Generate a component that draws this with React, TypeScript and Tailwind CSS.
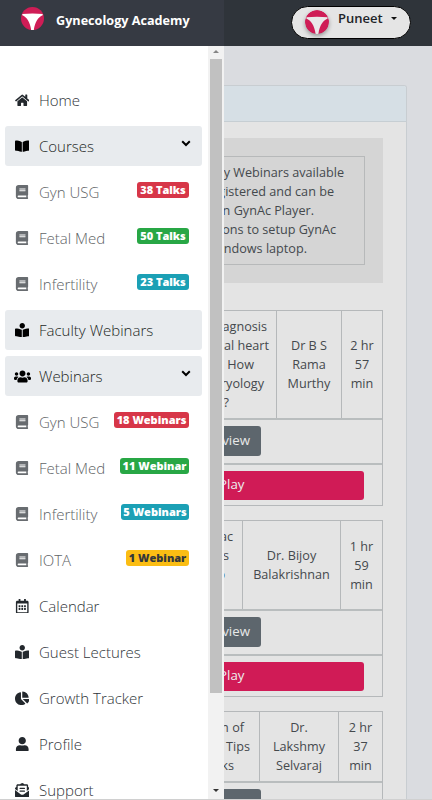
import React from "react";
import {
  FaHome, FaBookOpen, FaBook, FaBookReader, FaUsers, FaRegCalendarAlt,
  FaChartPie, FaUser, FaEnvelopeOpenText,
} from "react-icons/fa";
import type { IconType } from "react-icons";

function Logo({ className, fill }: { className: string; fill: string }) {
  return (
    <svg viewBox="0 0 24 24" className={className}>
      <circle cx="12" cy="12" r="12" fill="#cf1d56" />
      <path
        d="M1.4 7.2 Q12 6.4 22.6 7.2 L22.6 8.6 C18 10.6 14.6 15.5 13.4 23.9 H10.6 C9.4 15.5 6 10.6 1.4 8.6 Z"
        fill={fill}
      />
    </svg>
  );
}

type Item = {
  icon: IconType;
  label: string;
  kind: "link" | "group" | "sub";
  chevron?: boolean;
  badge?: string;
  badgeClass?: string;
};

const items: Item[] = [
  { icon: FaHome, label: "Home", kind: "link" },
  { icon: FaBookOpen, label: "Courses", kind: "group", chevron: true },
  { icon: FaBook, label: "Gyn USG", kind: "sub", badge: "38 Talks", badgeClass: "bg-[#d73648] text-white w-[52px]" },
  { icon: FaBook, label: "Fetal Med", kind: "sub", badge: "50 Talks", badgeClass: "bg-[#28a745] text-white w-[52px]" },
  { icon: FaBook, label: "Infertility", kind: "sub", badge: "23 Talks", badgeClass: "bg-[#1ba0b5] text-white w-[52px]" },
  { icon: FaBookReader, label: "Faculty Webinars", kind: "group" },
  { icon: FaUsers, label: "Webinars", kind: "group", chevron: true },
  { icon: FaBook, label: "Gyn USG", kind: "sub", badge: "18 Webinars", badgeClass: "bg-[#d73648] text-white w-[75px]" },
  { icon: FaBook, label: "Fetal Med", kind: "sub", badge: "11 Webinar", badgeClass: "bg-[#28a745] text-white w-[69px]" },
  { icon: FaBook, label: "Infertility", kind: "sub", badge: "5 Webinars", badgeClass: "bg-[#1ba0b5] text-white w-[68px]" },
  { icon: FaBook, label: "IOTA", kind: "sub", badge: "1 Webinar", badgeClass: "bg-[#fbbd13] text-[#33373b] w-[63px]" },
  { icon: FaRegCalendarAlt, label: "Calendar", kind: "link" },
  { icon: FaBookReader, label: "Guest Lectures", kind: "link" },
  { icon: FaChartPie, label: "Growth Tracker", kind: "link" },
  { icon: FaUser, label: "Profile", kind: "link" },
  { icon: FaEnvelopeOpenText, label: "Support", kind: "link" },
];

const rowClass = {
  link: "text-[#30353a]",
  group: "bg-[#e8ebee] text-[#1b1f23]",
  sub: "text-[#606366]",
};
const iconClass = { link: "text-[#23282d]", group: "text-black", sub: "text-[#686c70]" };

function NavRow({ item }: { item: Item }) {
  const Icon = item.icon;
  return (
    <div className={`flex h-10 w-[197px] shrink-0 items-center rounded-[3px] ${rowClass[item.kind]}`}>
      <span className={`ml-[7px] flex w-5 justify-center ${iconClass[item.kind]}`}>
        <Icon size={item.icon === FaUsers ? 17 : item.icon === FaBook ? 14 : 14.5} />
      </span>
      <span className="ml-[7px] whitespace-nowrap text-[15px] leading-5 font-light">{item.label}</span>
      {item.chevron && (
        <svg viewBox="0 0 10 7" className="mr-[11px] mb-[6px] ml-auto h-[7px] w-2.5">
          <path d="M1.2 1.3L5 5L8.8 1.3" fill="none" stroke="#000" strokeWidth="2" />
        </svg>
      )}
      {item.badge && (
        <span className={`mr-[13px] mb-1 ml-auto flex h-4 items-center justify-center rounded-[3px] whitespace-nowrap text-[11px] leading-4 font-extrabold ${item.badgeClass}`}>
          {item.badge}
        </span>
      )}
    </div>
  );
}

function Drawer() {
  return (
    <aside className="flex w-56 shrink-0 flex-col bg-white">
      <header className="flex h-[46px] shrink-0 items-center bg-[#363a43]">
        <Logo className="mb-[10px] ml-[21px] h-[23px] w-[23px]" fill="#ffffff" />
        <span className="mb-1.5 ml-3 text-[12.65px] font-bold whitespace-nowrap text-white">Gynecology Academy</span>
      </header>
      <div className="flex min-h-0 flex-1">
        <nav className="flex flex-1 flex-col gap-1.5 overflow-hidden pt-[35px] pl-[5px]">
          <div className="-mt-px flex flex-col gap-1.5">
            {items.map((item, i) => <NavRow key={i} item={item} />)}
          </div>
        </nav>
        <div className="flex w-4 flex-col items-center bg-[#f2f2f2] pr-px">
          <svg viewBox="0 0 6 3" className="mt-1 h-[3px] w-1.5"><path d="M0 3L3 0L6 3Z" fill="#858585" /></svg>
          <div className="mt-[6px] h-[634px] w-3 bg-[#c1c1c1]" />
          <svg viewBox="0 0 6 3" className="mt-auto mb-[7px] h-[3px] w-1.5"><path d="M0 0L3 3L6 0Z" fill="#333" /></svg>
        </div>
      </div>
    </aside>
  );
}

type Line = { text: string; inset: string };

function ClippedLines({ lines }: { lines: Line[] }) {
  return (
    <>
      {lines.map((line) => (
        <div key={line.text} className={`flex h-[19px] shrink-0 items-center justify-end whitespace-nowrap ${line.inset}`}>{line.text}</div>
      ))}
    </>
  );
}

function Cell({ lines, width }: { lines: string[]; width: string }) {
  return (
    <div className={`flex shrink-0 flex-col justify-center border-l border-[#b5b8ba] text-center ${width}`}>
      {lines.map((l) => <div key={l} className="h-[19px] leading-[19px] whitespace-nowrap">{l}</div>)}
    </div>
  );
}

function PreviewRow() {
  return (
    <div className="flex h-[44.5px] items-start border-t-2 border-[#b9bdbe] pt-1.5">
      <div className="flex h-[30px] w-[36.5px] items-center justify-end rounded-r-[3px] bg-[#5d666d] pr-[10.5px] text-[13.3px] whitespace-nowrap text-[#e8e8e8]">Preview</div>
    </div>
  );
}

function PlayRow() {
  return (
    <div className="flex h-[42.5px] items-start border-t-2 border-[#b9bdbe] pt-1.5">
      <div className="flex h-[29px] w-[139.5px] items-center justify-end rounded-r-[3px] bg-[#d01b56] pr-[119px] text-[13.3px] whitespace-nowrap text-[#eee]">Play</div>
    </div>
  );
}

type Lecture = {
  title: Line[];
  speaker: string[];
  time: string[];
  height: string;
  margin: string;
  speakerWidth: string;
  timeWidth: string;
};

const lectures: Lecture[] = [
  {
    title: [
      { text: "diagnosis", inset: "pr-[9px]" },
      { text: "fetal heart", inset: "pr-[7px]" },
      { text: ": How", inset: "pr-[22px]" },
      { text: "embryology", inset: "pr-[12px]" },
      { text: "?", inset: "pr-[47px]" },
    ],
    speaker: ["Dr B S", "Rama", "Murthy"],
    time: ["2 hr", "57", "min"],
    height: "h-[107px]", margin: "mt-[27px]", speakerWidth: "w-[65px]", timeWidth: "w-[41px]",
  },
  {
    title: [
      { text: "cardiac", inset: "pr-[9px]" },
      { text: "s", inset: "pr-[13px]" },
      { text: "o", inset: "pr-[17px]" },
      { text: "", inset: "" },
    ],
    speaker: ["Dr. Bijoy", "Balakrishnan"],
    time: ["1 hr", "59", "min"],
    height: "h-[88px]", margin: "mt-[14px]", speakerWidth: "w-[98px]", timeWidth: "w-[42px]",
  },
  {
    title: [
      { text: "Evaluation of", inset: "pr-[15px]" },
      { text: "Tips", inset: "pr-[9px]" },
      { text: "Tricks", inset: "pr-[25px]" },
    ],
    speaker: ["Dr.", "Lakshmy", "Selvaraj"],
    time: ["2 hr", "37", "min"],
    height: "h-[69px]", margin: "mt-[14px]", speakerWidth: "w-[79px]", timeWidth: "w-[44px]",
  },
];

function LectureTable({ lecture }: { lecture: Lecture }) {
  return (
    <div className={`w-[159px] shrink-0 border-y border-r border-[#b5b8ba] ${lecture.margin}`}>
      <div className={`flex ${lecture.height}`}>
        <div className="flex min-w-0 flex-1 flex-col justify-center overflow-hidden">
          <ClippedLines lines={lecture.title} />
        </div>
        <Cell lines={lecture.speaker} width={lecture.speakerWidth} />
        <Cell lines={lecture.time} width={lecture.timeWidth} />
      </div>
      <PreviewRow />
      <PlayRow />
    </div>
  );
}

const notice: Line[] = [
  { text: "Faculty Webinars available", inset: "pr-5" },
  { text: "registered and can be", inset: "pr-[30px]" },
  { text: "on GynAc Player.", inset: "pr-[50px]" },
  { text: "Instructions to setup GynAc", inset: "pr-[28px]" },
  { text: "Windows laptop.", inset: "pr-[57px]" },
];

function Content() {
  return (
    <main className="flex min-w-0 flex-1 flex-col overflow-hidden bg-[#dadce0]">
      <header className="flex h-[46px] shrink-0 items-center justify-end bg-[#2f343a] pr-[21px]">
        <div className="mb-[2px] flex h-[33px] w-[120px] items-center rounded-full border border-black bg-[#e5e5e5]">
          <Logo className="ml-[13px] h-6 w-6 rounded-full drop-shadow-[0_2px_2px_rgba(0,0,0,0.35)]" fill="#e9e9e9" />
          <span className="mb-[6px] ml-[9px] text-[13px] font-semibold text-[#202328]">Puneet</span>
          <svg viewBox="0 0 6 3" className="mb-2 ml-2 h-[3px] w-1.5"><path d="M0 0L3 3L6 0Z" fill="#111" /></svg>
        </div>
      </header>
      <section className="mt-[39px] flex w-[183px] flex-1 flex-col overflow-hidden rounded-tr-[3px] border-t border-r border-[#c8cdd1] bg-[#e4e4e4] text-[12.65px] text-[#44494d]">
        <div className="h-9 shrink-0 border-b border-[#c6ced3] bg-[#d6dfe5]" />
        <div className="mt-4 h-[145px] w-[159px] shrink-0 bg-[#d5d5d5] pt-[18px]">
          <div className="flex h-[109px] w-[141px] flex-col justify-center overflow-hidden border-y border-r border-[#b7b9ba]">
            <ClippedLines lines={notice} />
          </div>
        </div>
        {lectures.map((l, i) => <LectureTable key={i} lecture={l} />)}
      </section>
    </main>
  );
}

export default function App() {
  return (
    <div className="flex h-[800px] w-[432px] overflow-hidden border-b border-[#d0d0d0] font-['Open_Sans','Noto_Sans',sans-serif]">
      <Drawer />
      <Content />
    </div>
  );
}
